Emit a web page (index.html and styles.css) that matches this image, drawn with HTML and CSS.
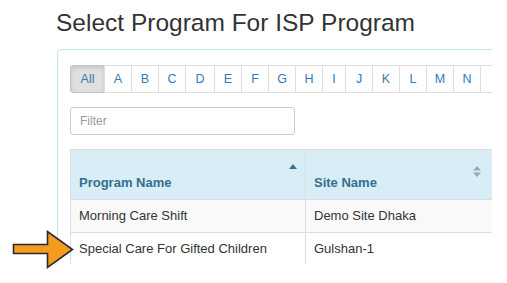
FILE: index.html
```html
<!DOCTYPE html>
<html>
<head>
<meta charset="utf-8">
<link rel="stylesheet" href="styles.css">
</head>
<body>
<div class="clip">
  <h2 class="title">Select Program For ISP Program</h2>
  <div class="panel">
    <div class="pager">
      <span class="pg active">All</span><span class="pg">A</span><span class="pg">B</span><span class="pg">C</span><span class="pg wide">D</span><span class="pg">E</span><span class="pg">F</span><span class="pg">G</span><span class="pg">H</span><span class="pg narrow">I</span><span class="pg">J</span><span class="pg">K</span><span class="pg">L</span><span class="pg">M</span><span class="pg">N</span><span class="pg blank"></span>
    </div>
    <input class="filter" type="text" placeholder="Filter">
    <table class="grid">
      <thead>
        <tr>
          <th class="c1">Program Name
            <svg class="sort" width="8" height="5" viewBox="0 0 8 5"><path d="M0 5 L4 0 L8 5 Z" fill="#3d6e8f"/></svg>
          </th>
          <th class="c2">Site Name
            <svg class="sort both" width="8" height="11" viewBox="0 0 8 11"><path d="M0 4.5 L4 0 L8 4.5 Z M0 6.5 L4 11 L8 6.5 Z" fill="#9aa7b0"/></svg>
          </th>
        </tr>
      </thead>
      <tbody>
        <tr class="odd"><td>Morning Care Shift</td><td>Demo Site Dhaka</td></tr>
        <tr><td>Special Care For Gifted Children</td><td>Gulshan-1</td></tr>
        <tr><td>&nbsp;</td><td>&nbsp;</td></tr>
      </tbody>
    </table>
  </div>
</div>
<svg class="arrow" width="64" height="40" viewBox="0 0 64 40">
  <path d="M1.5 14.5 L35.5 14.5 L35.5 1.5 L60.5 19.5 L35.5 37.5 L35.5 23.5 L1.5 23.5 Z" fill="#f39c1f" stroke="#2b2b2b" stroke-width="1.6" stroke-linejoin="miter"/>
</svg>
</body>
</html>
```
FILE: styles.css
```css
html, body {
  margin: 0;
  padding: 0;
  background: #fff;
}
body {
  font-family: "Liberation Sans", Arial, sans-serif;
  color: #333;
  position: relative;
  width: 507px;
  height: 283px;
  overflow: hidden;
}
.clip {
  width: 492px;
  height: 264px;
  overflow: hidden;
  padding-left: 56px;
  box-sizing: border-box;
}
.title {
  margin: 0;
  padding-top: 9px;
  font-weight: normal;
  font-size: 24.5px;
  line-height: 28px;
  height: 40px;
  color: #333;
  white-space: nowrap;
}
.panel {
  margin-left: 1px;
  width: 600px;
  border: 1px solid #bfe6f0;
  border-radius: 4px;
  padding: 15px 12px 0 12px;
  box-sizing: border-box;
  height: 300px;
}
.pager {
  display: flex;
  height: 28px;
}
.pg {
  display: block;
  flex: none;
  box-sizing: border-box;
  width: 28px;
  height: 28px;
  font-size: 12.5px;
  line-height: 26px;
  border: 1px solid #ddd;
  margin-left: -1px;
  color: #337ab7;
  background: #fff;
  text-align: center;
}
.pg.wide {
  width: 30px;
}
.pg.narrow {
  width: 24px;
}
.pg.blank {
  width: 40px;
}
.pg.active {
  margin-left: 0;
  width: 35px;
  border-radius: 3px 0 0 3px;
  background: #e0e0e0;
  border-color: #c4c4c4;
  box-shadow: inset 0 2px 4px rgba(0,0,0,0.12);
}
.filter {
  display: block;
  margin-top: 14px;
  width: 225px;
  height: 28px;
  box-sizing: border-box;
  border: 1px solid #ccc;
  border-radius: 3px;
  padding: 4px 9px;
  font-family: "Liberation Sans", Arial, sans-serif;
  font-size: 12px;
  color: #555;
  outline: none;
}
.filter::placeholder {
  color: #999;
}
.grid {
  margin-top: 14px;
  border-collapse: collapse;
  width: 560px;
  font-size: 13px;
}
.grid th, .grid td {
  border: 1px solid #ddd;
  text-align: left;
  padding: 8px 8px;
  line-height: 16px;
}
.grid th {
  position: relative;
  background: #d9edf7;
  color: #31708f;
  font-weight: bold;
  font-size: 13px;
  vertical-align: bottom;
  height: 33px;
  padding-bottom: 8px;
}
.grid .c1 {
  width: 218px;
}
.grid td {
  height: 16px;
}
.grid tr.odd td {
  background: #f9f9f9;
}
.sort {
  position: absolute;
  right: 8px;
  top: 14px;
}
.sort.both {
  top: 16px;
  right: 148px;
}
.arrow {
  position: absolute;
  left: 12px;
  top: 230px;
}
```
